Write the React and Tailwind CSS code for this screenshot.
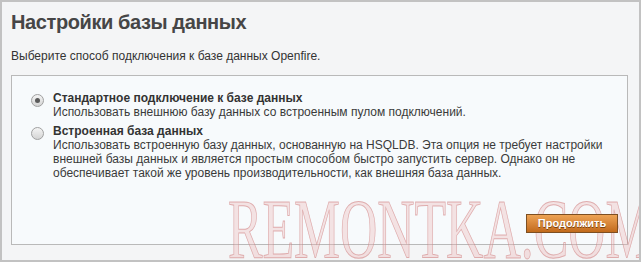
import React from 'react';

const Radio = ({ checked }) => (
    <div className="mt-[3px] flex h-[13px] w-[13px] shrink-0 items-center justify-center rounded-full border border-[#a0a0a0] bg-gradient-to-b from-[#f4f4f4] to-[#d4d4d4]">
        {checked && <div className="h-[5px] w-[5px] rounded-full bg-[#5a5a5a]" />}
    </div>
);

const Option = ({ checked, title, children }) => (
    <div className="flex gap-[9px]">
        <Radio checked={checked} />
        <div className="text-[12px] leading-[14px] text-[#333]">
            <div className="font-bold text-[#333]">{title}</div>
            <div className="text-[#3a3a3a]">{children}</div>
        </div>
    </div>
);

const App = () => {
    return (
        <div
            className="relative h-[262px] w-[641px] overflow-hidden border-2 border-[#c2c2c2] bg-[#f4f5f6] px-[9px] pt-[7px]"
            style={{ fontFamily: '"Liberation Sans", Arial, sans-serif' }}
        >
            <h1 className="text-[20px] font-bold leading-[26px] tracking-[-0.4px] text-[#464646]">Настройки базы данных</h1>
            <p className="mt-[13px] text-[12px] leading-[16px] text-[#333]">
                Выберите способ подключения к базе данных Openfire.
            </p>

            <div className="mt-[11px] flex h-[170px] w-[617px] flex-col border border-[#b9b9b9] bg-[#f7fafc] pl-[19px] pr-[9px] pt-[15px]">
                <div className="flex flex-col gap-[5px]">
                    <Option checked title="Стандартное подключение к базе данных">
                        Использовать внешнюю базу данных со встроенным пулом подключений.
                    </Option>
                    <Option title="Встроенная база данных">
                        Использовать встроенную базу данных, основанную на HSQLDB. Эта опция не требует настройки
                        <br />
                        внешней базы данных и является простым способом быстро запустить сервер. Однако он не
                        <br />
                        обеспечивает такой же уровень производительности, как внешняя база данных.
                    </Option>
                </div>
                <div className="mt-auto mb-[11px] flex justify-end">
                    <button className="relative z-10 h-[19px] w-[92px] border border-[#7d4f22] bg-gradient-to-b from-[#eda354] to-[#c26a1a] text-[11px] font-bold leading-[17px] text-white [text-shadow:0_1px_0_#7a4210]">
                        Продолжить
                    </button>
                </div>
            </div>

            <div
                className="pointer-events-none absolute left-[226px] top-[186px] origin-left scale-x-[0.615] whitespace-nowrap text-[84px] leading-[84px] text-[rgba(236,180,180,0.35)] [-webkit-text-stroke:1px_rgba(205,120,120,0.55)]"
                style={{ fontFamily: '"Liberation Serif", "Times New Roman", serif' }}
            >
                REMONTKA.COM
            </div>
        </div>
    );
};

export default App;
